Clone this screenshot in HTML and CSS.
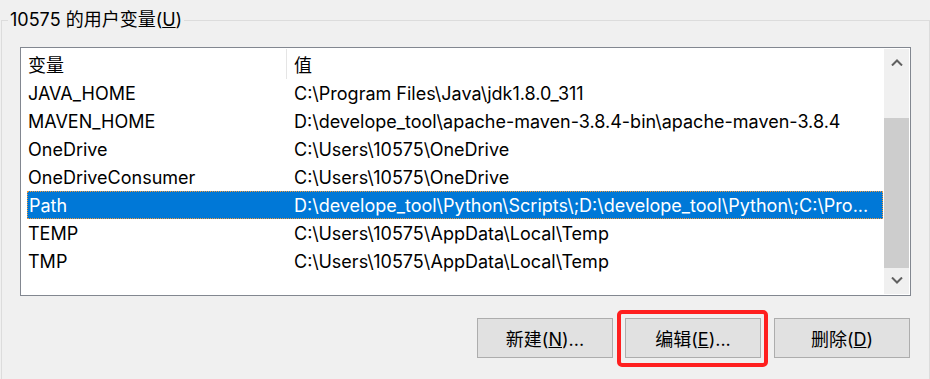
FILE: index.html
```html
<!DOCTYPE html>
<html lang="zh-CN">

<head>
    <meta charset="UTF-8">
    <title>环境变量</title>
    <link rel="stylesheet" href="styles.css">
</head>

<body>
    <fieldset class="group">
        <legend class="group-title">10575 的用户变量(<u>U</u>)</legend>
        <div class="group-body">
            <div class="listbox">
                <div class="list">
                    <div class="list-header">
                        <div class="col-name">变量</div>
                        <div class="col-value">值</div>
                    </div>
                    <div class="row">
                        <div class="col-name">JAVA_HOME</div>
                        <div class="col-value">C:\Program Files\Java\jdk1.8.0_311</div>
                    </div>
                    <div class="row">
                        <div class="col-name">MAVEN_HOME</div>
                        <div class="col-value">D:\develope_tool\apache-maven-3.8.4-bin\apache-maven-3.8.4</div>
                    </div>
                    <div class="row">
                        <div class="col-name">OneDrive</div>
                        <div class="col-value">C:\Users\10575\OneDrive</div>
                    </div>
                    <div class="row">
                        <div class="col-name">OneDriveConsumer</div>
                        <div class="col-value">C:\Users\10575\OneDrive</div>
                    </div>
                    <div class="row selected">
                        <div class="col-name">Path</div>
                        <div class="col-value">D:\develope_tool\Python\Scripts\;D:\develope_tool\Python\;C:\Pro...</div>
                    </div>
                    <div class="row">
                        <div class="col-name">TEMP</div>
                        <div class="col-value">C:\Users\10575\AppData\Local\Temp</div>
                    </div>
                    <div class="row">
                        <div class="col-name">TMP</div>
                        <div class="col-value">C:\Users\10575\AppData\Local\Temp</div>
                    </div>
                </div>
                <div class="scrollbar">
                    <div class="sb-btn">
                        <svg width="12" height="7" viewBox="0 0 12 7"><polyline points="1,6.5 6,1.5 11,6.5" /></svg>
                    </div>
                    <div class="sb-track">
                        <div class="sb-thumb"></div>
                    </div>
                    <div class="sb-btn">
                        <svg width="12" height="7" viewBox="0 0 12 7"><polyline points="1,0.5 6,5.5 11,0.5" /></svg>
                    </div>
                </div>
            </div>

            <div class="buttons">
                <button class="btn">新建(<u>N</u>)...</button>
                <button class="btn marked">编辑(<u>E</u>)...</button>
                <button class="btn">删除(<u>D</u>)</button>
            </div>
        </div>
    </fieldset>
</body>

</html>
```
FILE: styles.css
```css
body {
    margin: 0;
    padding: 0;
    background-color: #f0f0f0;
    font-family: Inter, "Noto Sans CJK SC", sans-serif;
    font-size: 18px;
    color: #000;
    overflow: hidden;
}

.group {
    margin: 8px 0 0 1px;
    padding: 0;
    border: 1px solid #dcdcdc;
    border-bottom: none;
    min-width: 0;
}

.group-title {
    margin-left: 6px;
    padding: 0 2px;
    line-height: 24px;
}

.group-body {
    padding: 15px 0 30px 18px;
}

.listbox {
    width: 891px;
    height: 249px;
    box-sizing: border-box;
    border: 1px solid #828790;
    padding: 1px;
    background-color: #fff;
    display: flex;
}

.list {
    flex: 1;
    padding: 0 1px 0 5px;
    min-width: 0;
}

.list-header,
.row {
    display: flex;
    white-space: nowrap;
}

.list-header {
    height: 30px;
    line-height: 34px;
}

.list-header .col-name {
    border-right: 1px solid #e5e5e5;
    padding-left: 1px;
}

.row {
    height: 28px;
    line-height: 27px;
    padding-top: 1px;
    box-sizing: border-box;
}

.col-name {
    width: 260px;
    padding-left: 1px;
    box-sizing: border-box;
    flex-shrink: 0;
}

.col-value {
    flex: 1;
    padding-left: 7px;
    overflow: hidden;
}

.row.selected {
    background-color: #0078d7;
    color: #fff;
    outline: 1px dotted #f59a3b;
    outline-offset: -1px;
}

.row.selected .col-name {
    padding-left: 2px;
}

.scrollbar {
    width: 25px;
    background-color: #f0f0f0;
    display: flex;
    flex-direction: column;
}

.sb-btn {
    height: 27px;
    display: flex;
    align-items: center;
    justify-content: center;
}

.sb-btn svg polyline {
    fill: none;
    stroke: #606060;
    stroke-width: 2;
}

.sb-track {
    flex: 1;
    padding-top: 42px;
}

.sb-thumb {
    height: 150px;
    background-color: #cdcdcd;
}

.buttons {
    width: 890px;
    margin-top: 22px;
    display: flex;
    justify-content: flex-end;
    gap: 12px;
}

.btn {
    width: 136px;
    height: 40px;
    border: 1px solid #adadad;
    background-color: #e1e1e1;
    font-family: inherit;
    font-size: 18px;
    color: #000;
    padding: 0;
}

.btn.marked {
    position: relative;
    margin-right: 1px;
}

.btn.marked::after {
    content: "";
    position: absolute;
    top: -9px;
    left: -9px;
    right: -8px;
    bottom: -10px;
    border: 4px solid #ff1f1f;
    border-radius: 5px;
}
```
